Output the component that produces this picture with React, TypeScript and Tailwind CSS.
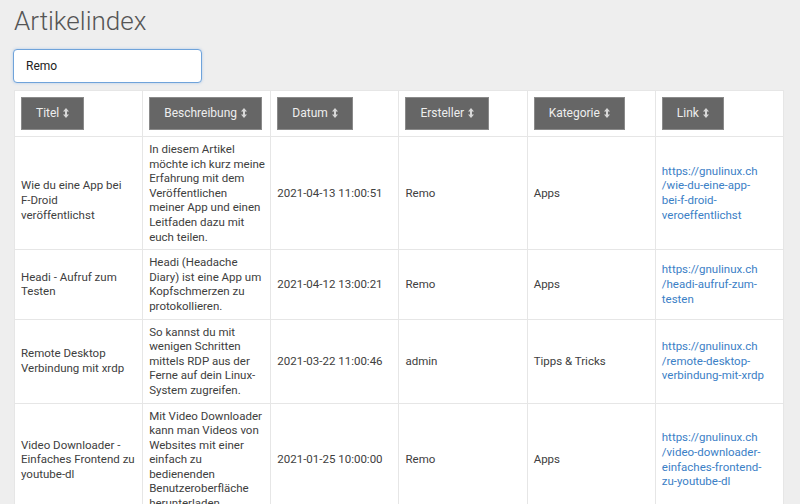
import { useEffect, useRef, useState } from "react";

type Article = {
    title: string[];
    description: string[];
    date: string;
    author: string;
    category: string;
    link: string[];
    offset?: boolean;
};

// line breaks follow the original column wrapping
const articles: Article[] = [
    {
        title: ["Wie du eine App bei", "F-Droid", "veröffentlichst"],
        description: ["In diesem Artikel", "möchte ich kurz meine", "Erfahrung mit dem", "Veröffentlichen", "meiner App und einen", "Leitfaden dazu mit", "euch teilen."],
        date: "2021-04-13 11:00:51",
        author: "Remo",
        category: "Apps",
        link: ["https://gnulinux.ch", "/wie-du-eine-app-", "bei-f-droid-", "veroeffentlichst"],
        offset: true,
    },
    {
        title: ["Headi - Aufruf zum", "Testen"],
        description: ["Headi (Headache", "Diary) ist eine App um", "Kopfschmerzen zu", "protokollieren."],
        date: "2021-04-12 13:00:21",
        author: "Remo",
        category: "Apps",
        link: ["https://gnulinux.ch", "/headi-aufruf-zum-", "testen"],
    },
    {
        title: ["Remote Desktop", "Verbindung mit xrdp"],
        description: ["So kannst du mit", "wenigen Schritten", "mittels RDP aus der", "Ferne auf dein Linux-", "System zugreifen."],
        date: "2021-03-22 11:00:46",
        author: "admin",
        category: "Tipps & Tricks",
        link: ["https://gnulinux.ch", "/remote-desktop-", "verbindung-mit-xrdp"],
    },
    {
        title: ["Video Downloader -", "Einfaches Frontend zu", "youtube-dl"],
        description: ["Mit Video Downloader", "kann man Videos von", "Websites mit einer", "einfach zu", "bedienenden", "Benutzeroberfläche", "herunterladen."],
        date: "2021-01-25 10:00:00",
        author: "Remo",
        category: "Apps",
        link: ["https://gnulinux.ch", "/video-downloader-", "einfaches-frontend-", "zu-youtube-dl"],
    },
];

const columns = ["Titel", "Beschreibung", "Datum", "Ersteller", "Kategorie", "Link"];

function SortIcon() {
    return (
        <svg width="6" height="10" viewBox="0 0 6 10" className="ml-[4px] inline-block align-[-1px]">
            <path d="M3 0 L6 3.6 H4 V6.4 H6 L3 10 L0 6.4 H2 V3.6 H0 Z" fill="#d8d8d8" />
        </svg>
    );
}

function Lines({ lines }: { lines: string[] }) {
    return (
        <>
            {lines.map((l, i) => (
                <span key={i} className="block whitespace-nowrap">{l}</span>
            ))}
        </>
    );
}

export default function App() {
    const [query, setQuery] = useState("Remo");
    const inputRef = useRef<HTMLInputElement>(null);

    useEffect(() => {
        const el = inputRef.current;
        if (el) {
            el.focus();
            el.setSelectionRange(el.value.length, el.value.length);
        }
    }, []);

    const cell = "border border-[#e6e6e6] px-[6px] py-[5px] align-middle";

    return (
        <div className="min-h-[504px] bg-[#eeeeee] px-[14px] pt-[6px] font-['Roboto',sans-serif] text-[#404040]">
            {/* Heading */}
            <h1 className="text-[26px] font-light leading-[30px] text-[#555]">Artikelindex</h1>

            {/* Search */}
            <input
                ref={inputRef}
                className="mt-[13px] -ml-px block h-[34px] w-[189px] rounded-[4px] border border-[#6fa3da] bg-white px-3 text-[12px] text-[#222] caret-[#222] outline-none shadow-[0_0_3px_rgba(102,160,230,0.45)]"
                value={query}
                onChange={(e) => setQuery(e.target.value)}
            />

            {/* Table */}
            <table className="mt-[7px] w-[770px] table-fixed border-collapse bg-white text-[11.5px] leading-[14.6px]">
                <thead>
                    <tr>
                        {columns.map((c) => (
                            <th key={c} className="border border-[#e6e6e6] px-[6px] py-[6px] text-left font-normal">
                                <button className="block h-[33px] whitespace-nowrap border border-[#8a8a8a] bg-[#666666] px-[14px] text-[12px] text-[#eeeeee]">
                                    {c}
                                    <SortIcon />
                                </button>
                            </th>
                        ))}
                    </tr>
                </thead>
                <tbody>
                    {articles.map((a) => (
                        <tr key={a.date}>
                            <td className={cell}>
                                {a.offset && <span className="block h-[14.6px]" />}
                                <Lines lines={a.title} />
                            </td>
                            <td className={cell}>
                                <Lines lines={a.description} />
                            </td>
                            <td className={cell + " whitespace-nowrap"}>{a.date}</td>
                            <td className={cell}>{a.author}</td>
                            <td className={cell}>{a.category}</td>
                            <td className={cell}>
                                <a href="#" className="text-[#3b80c6]">
                                    <Lines lines={a.link} />
                                </a>
                            </td>
                        </tr>
                    ))}
                </tbody>
            </table>
        </div>
    );
}
